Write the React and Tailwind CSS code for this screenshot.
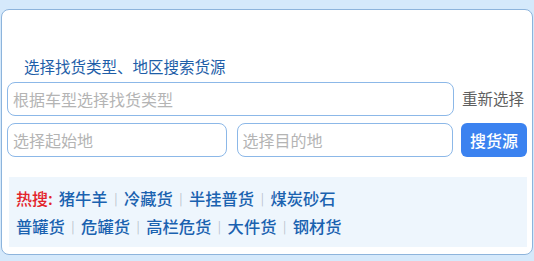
import React from 'react'

const font = { fontFamily: '"Noto Sans CJK SC", "Noto Sans", sans-serif' }

const line1 = ['猪牛羊', '冷藏货', '半挂普货', '煤炭砂石']
const line2 = ['普罐货', '危罐货', '高栏危货', '大件货', '钢材货']

function HotLine({ items }) {
  return (
    <div className="flex items-center h-[28px]">
      {items.map((t, i) => (
        <React.Fragment key={t}>
          {i > 0 && <span className="text-[12px] text-[#b8c2cc] mx-[6.5px]">|</span>}
          <span className="text-[#1a62b0] font-medium text-[16.3px]">{t}</span>
        </React.Fragment>
      ))}
    </div>
  )
}

export default function App() {
  return (
    <div className="w-[534px] h-[261px] bg-[#d5e9fb] pt-[9px] px-[1px] overflow-hidden" style={font}>
      <div className="h-[246px] bg-white border border-[#8db4dc] rounded-[8px] px-[5px] pt-[46px]">
        <div className="pl-[17px] text-[15.5px] leading-[20px] text-[#1e5ea8]">选择找货类型、地区搜索货源</div>

        <div className="flex items-center mt-[6px]">
          <div className="w-[447px] h-[34px] border border-[#8cb8e8] rounded-[8px] flex items-center px-[5px] text-[16px] text-[#b4b4b4]">
            根据车型选择找货类型
          </div>
          <span className="ml-[8px] text-[15.5px] text-[#5f5f5f]">重新选择</span>
        </div>

        <div className="flex items-center mt-[7px]">
          <div className="w-[220px] h-[34px] border border-[#8cb8e8] rounded-[8px] flex items-center px-[5px] text-[16px] text-[#b4b4b4]">
            选择起始地
          </div>
          <div className="ml-[10px] w-[217px] h-[34px] border border-[#8cb8e8] rounded-[8px] flex items-center px-[5px] text-[16px] text-[#b4b4b4]">
            选择目的地
          </div>
          <div className="ml-[8px] w-[66px] h-[34px] bg-[#3b82f0] rounded-[6px] flex items-center justify-center text-[16px] font-medium text-white">
            搜货源
          </div>
        </div>

        <div className="mt-[20px] mx-[2px] w-[518px] h-[70px] bg-[#eef6fd] pt-[7px] px-[7px] text-[16px]">
          <div className="flex items-center h-[28px]">
            <span className="text-[#e3242b] font-medium mr-[6px]">热搜:</span>
            <HotLine items={line1} />
          </div>
          <HotLine items={line2} />
        </div>
      </div>
    </div>
  )
}
